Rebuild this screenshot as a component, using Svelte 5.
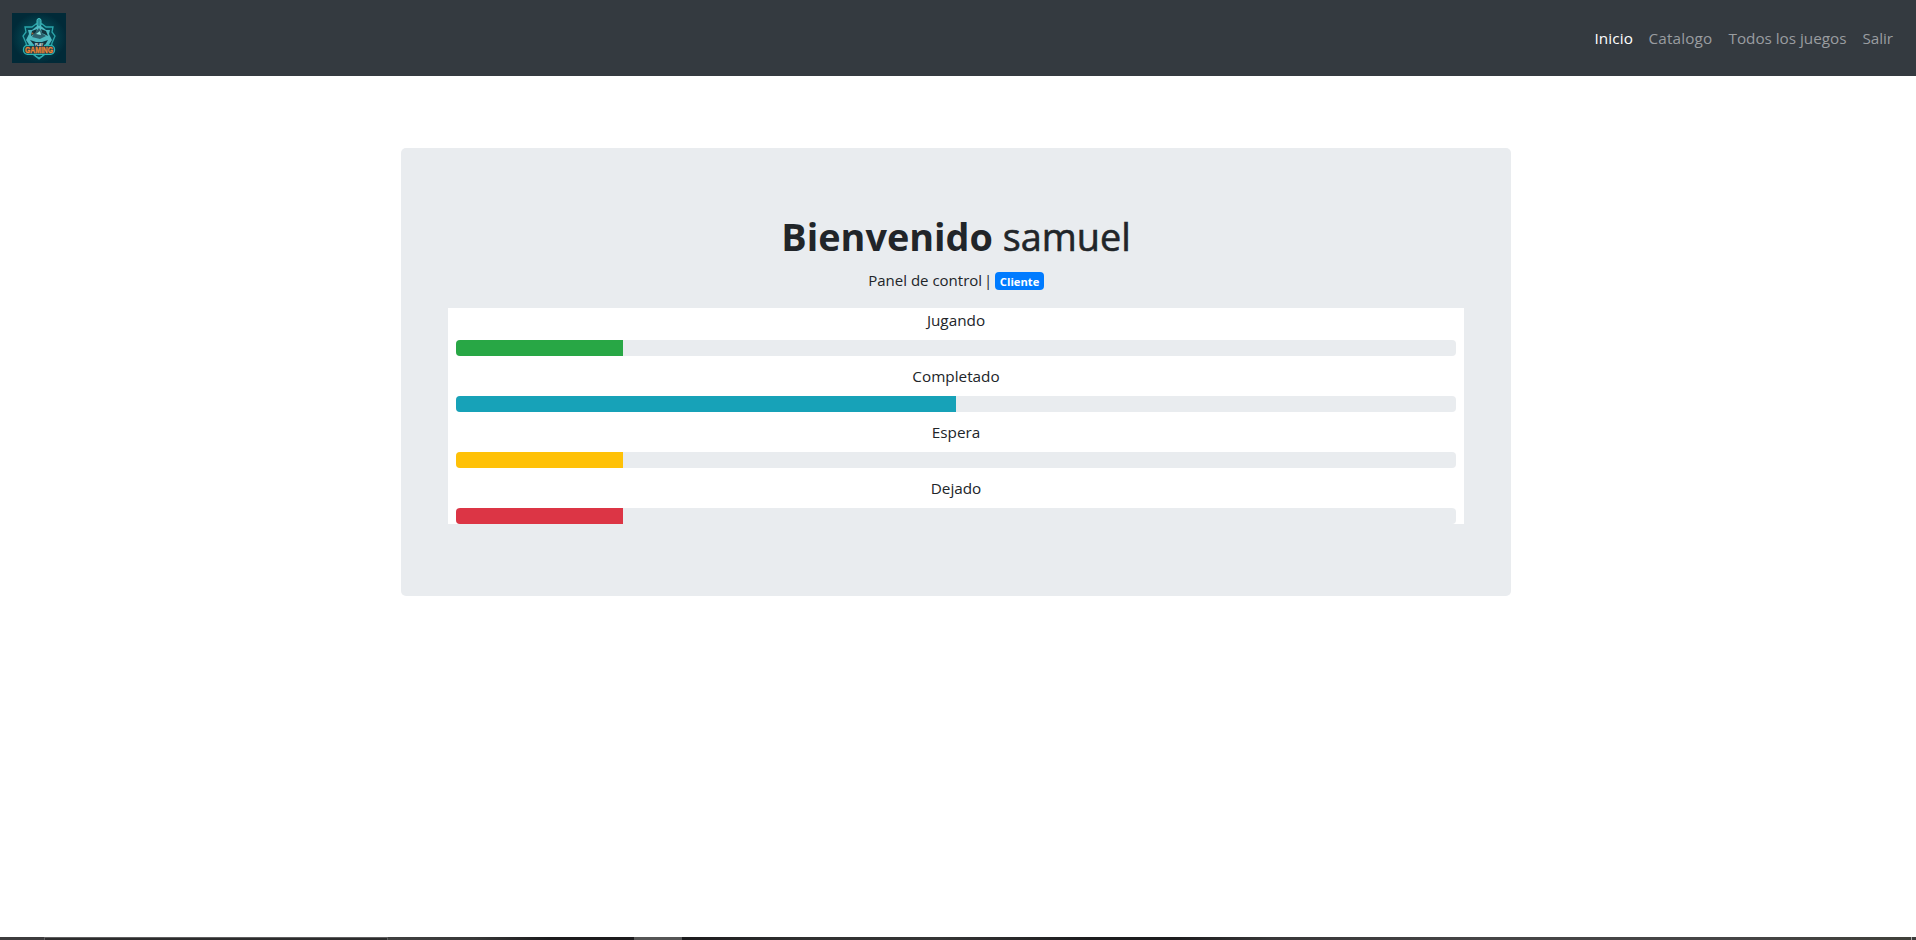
<script>
  const links = [
    { label: 'Inicio', kind: 'home', active: true },
    { label: 'Catalogo', kind: 'catalog' },
    { label: 'Todos los juegos', kind: 'games' },
    { label: 'Salir', kind: 'exit' }
  ];
  const stats = [
    { label: 'Jugando', value: 16.7, color: '#28a745' },
    { label: 'Completado', value: 50, color: '#17a2b8' },
    { label: 'Espera', value: 16.7, color: '#ffc107' },
    { label: 'Dejado', value: 16.7, color: '#dc3545' }
  ];
</script>

<div class="page">
  <nav class="navbar">
    <svg class="logo" viewBox="0 0 54 50" aria-label="Play Gaming">
      <defs>
        <radialGradient id="glow">
          <stop offset="0" stop-color="#087078" />
          <stop offset="0.55" stop-color="#03434f" />
          <stop offset="1" stop-color="#012a38" />
        </radialGradient>
      </defs>
      <rect width="54" height="50" fill="url(#glow)" />
      <path d="M24 11 L20 14 L13 14 L14 19 L11 23 L14 30 L15 35 L22 42 L27 46 L32 42 L39 35 L40 30 L43 23 L40 19 L41 14 L34 14 L30 11Z" fill="#064653" stroke="#2aa5aa" stroke-width="1.3" />
      <rect x="25" y="5.5" width="4" height="8" rx="2" fill="#278e98" stroke="#48c4c5" />
      <path d="M25 13 H29 L34 17 L38 17 L37 21 L40 27 L36 33 H18 L14 27 L17 21 L16 17 L20 17Z" fill="#4db9c0" />
      <path d="M20 18 L25 16 L24 20 L19 23Z M29 16 L34 18 L36 23 L30 20Z M18 27 L24 29 L30 29 L36 27 L33 32 H22Z" fill="#12343e" />
      <path d="M22 21 L27 15 L31 21 L34 23 L28 26 L20 24Z" fill="#2d626e" />
      <path d="M24 21 L28 18 L29 22Z" fill="#8ce5df" />
      <circle cx="20.5" cy="20.5" r="1" fill="#9a6137" />
      <path d="M23 42.5 L27 45 L31 42.5" fill="none" stroke="#35aeb2" />
      <rect x="11.5" y="32.3" width="31" height="9" rx="4" fill="#163f4b" stroke="#2bb5b4" stroke-width="1.3" />
      <rect x="22" y="29.5" width="10" height="4" fill="#173c4d" />
      <text class="logo-small" x="27" y="33" text-anchor="middle" textLength="8" lengthAdjust="spacingAndGlyphs">PLAY</text>
      <text class="logo-big" x="27" y="39.8" text-anchor="middle" textLength="28" lengthAdjust="spacingAndGlyphs">GAMING</text>
    </svg>
    <ul class="links">
      {#each links as link}
        <li class={link.kind} class:active={link.active}>{link.label}</li>
      {/each}
    </ul>
  </nav>

  <main class="card">
    <h1><b>Bienvenido</b> <span class="name">samuel</span></h1>
    <p class="subtitle"><span>Panel de control</span><span>|</span><span class="badge">Cliente</span></p>
    <section class="stats">
      {#each stats as stat}
        <div class="stat">
          <div class="label">{stat.label}</div>
          <div class="progress">
            <div class="bar" style:width="{stat.value}%" style:background={stat.color}></div>
          </div>
        </div>
      {/each}
    </section>
  </main>

  <footer class="taskbar">
    <div class="start"></div>
    <div class="search"></div>
    <div class="apps"></div>
    <div class="open-app"></div>
    <div class="tray"></div>
    <div class="tick"></div>
    <div class="edge"></div>
  </footer>
</div>

<style>
  :global(body) {
    margin: 0;
    overflow: hidden;
    background: #fff;
  }
  .page {
    display: flex;
    flex-direction: column;
    height: 940px;
    box-sizing: border-box;
    font-family: "Open Sans", "Noto Sans", sans-serif;
    font-size: 15.3px;
    line-height: 24px;
    color: #212529;
  }
  .navbar {
    display: flex;
    align-items: center;
    justify-content: space-between;
    height: 76px;
    padding: 0 16px 0 12px;
    box-sizing: border-box;
    background: #343a40;
  }
  .logo {
    display: block;
    width: 54px;
    height: 50px;
  }
  .logo-small {
    font: bold 4px "Liberation Sans", sans-serif;
    fill: #e6f5f5;
  }
  .logo-big {
    font: bold 8.5px "Liberation Sans", sans-serif;
    fill: #f08a38;
    stroke: #e8802e;
    stroke-width: 0.3;
  }
  .links {
    display: flex;
    gap: 16px;
    margin: 0;
    padding: 0 7px 0 8px;
    list-style: none;
    color: #9a9da0;
  }
  .links li {
    white-space: nowrap;
  }
  .links .active {
    color: #fff;
  }
  .home {
    width: 38px;
    letter-spacing: 0.1px;
  }
  .catalog {
    width: 64px;
    letter-spacing: 0.15px;
  }
  .games {
    width: 118px;
    letter-spacing: -0.03px;
  }
  .exit {
    width: 30.5px;
    letter-spacing: -0.1px;
  }
  .card {
    width: 1110px;
    height: 448px;
    margin: 72px 0 0 401px;
    padding: 64px 47px;
    box-sizing: border-box;
    border-radius: 5px;
    background: #e9ecef;
    text-align: center;
  }
  h1 {
    margin: 0 0 8px;
    padding-top: 1px;
    height: 48px;
    box-sizing: border-box;
    font-size: 37.8px;
    line-height: 48px;
    font-weight: 400;
    white-space: nowrap;
  }
  h1 b {
    font-weight: 700;
  }
  .name {
    -webkit-text-stroke: 0.6px #212529;
  }
  .subtitle {
    display: flex;
    justify-content: center;
    align-items: center;
    gap: 2px;
    height: 24px;
    margin: 0 0 16px;
    font-size: 15px;
  }
  .badge {
    height: 18px;
    margin-top: 2px;
    margin-left: 1px;
    padding: 0 4.5px;
    border-radius: 4px;
    background: #007bff;
    color: #fff;
    font-size: 11.2px;
    font-weight: 700;
    line-height: 19px;
  }
  .stats {
    display: flex;
    flex-direction: column;
    gap: 8px;
    padding: 0 8px;
    background: #fff;
  }
  .label {
    margin-bottom: 8px;
  }
  .progress {
    height: 16px;
    overflow: hidden;
    border-radius: 4px;
    background: #e9ecef;
  }
  .bar {
    height: 100%;
  }
  .taskbar {
    display: flex;
    height: 3px;
    margin-top: auto;
    background: #444;
  }
  .start {
    width: 44px;
    background: #3d3c3d;
  }
  .search {
    width: 344px;
    box-sizing: border-box;
    border: 1px solid #5f5e5f;
    border-bottom: 0;
    background: #2d2c2d;
  }
  .apps {
    width: 246px;
    background: linear-gradient(90deg, #404040, #383838 35%, #1c1b1d 65%, #1c1b1d);
  }
  .open-app {
    width: 48px;
    background: #555;
  }
  .tray {
    width: 1229px;
    background: linear-gradient(90deg, #1c1b1d, #303030 10%, #353535 21%, #1d1c1e 33%, #1d1c1e 40%, #383738 48%, #464546 65%, #464546 85%, #40403a);
  }
  .tick {
    width: 1px;
    background: #aaa;
  }
  .edge {
    flex: 1;
    background: #3d3d3d;
  }
</style>
